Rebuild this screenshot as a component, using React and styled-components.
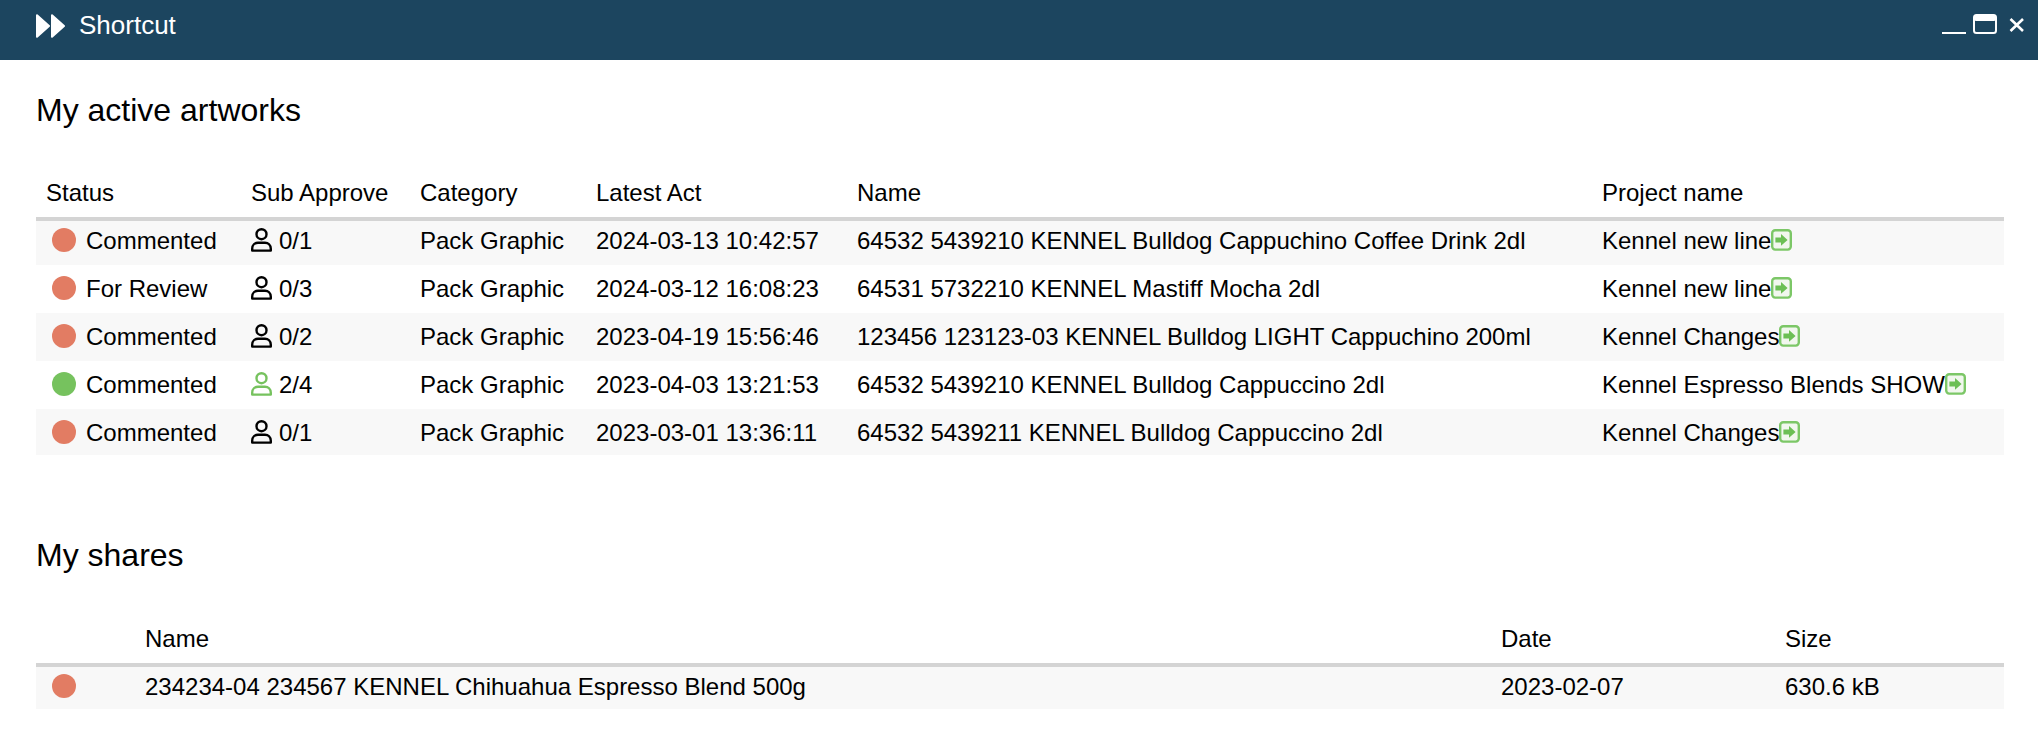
import React from "react";
import styled, { createGlobalStyle } from "styled-components";

const Global = createGlobalStyle`
  html, body { margin: 0; padding: 0; background: #fff; }
  body { font-family: "Liberation Sans", Arial, sans-serif; color: #000; }
`;

const Page = styled.div`
  width: 2038px;
  height: 736px;
  overflow: hidden;
  display: flex;
  flex-direction: column;
`;

const TitleBar = styled.header`
  height: 60px;
  flex: none;
  background: #1c455f;
  color: #fff;
  display: flex;
  align-items: flex-start;
  padding: 0 13px 0 36px;
`;

const TitleIcon = styled.svg`
  display: block;
  flex: none;
  margin-top: 14px;
`;

const TitleText = styled.span`
  font-size: 26px;
  margin-left: 14px;
  line-height: 50px;
  flex: 1;
`;

const WindowControls = styled.div`
  display: flex;
  align-items: flex-start;
`;

const ControlIcon = styled.svg`
  display: block;
  flex: none;
  margin-right: ${(p) => p.$gap || 0}px;
`;

const Content = styled.main`
  padding: 0 34px 0 36px;
`;

const Heading = styled.h2`
  margin: 0;
  font-weight: 400;
  font-size: 32px;
  line-height: 40px;
  padding-top: ${(p) => p.$top}px;
`;

const HeadRow = styled.div`
  display: grid;
  grid-template-columns: ${(p) => p.$cols};
  height: 52px;
  margin-top: ${(p) => p.$top}px;
  border-bottom: 4px solid #d4d4d4;
  font-size: 24px;
  line-height: 28px;
`;

const HeadCell = styled.div`
  padding: 14px 0 0 10px;
`;

const Row = styled.div`
  display: grid;
  grid-template-columns: ${(p) => p.$cols};
  background: ${(p) => (p.$alt ? "#f8f8f8" : "#fff")};
  font-size: 24px;
  line-height: 26px;
  padding: 11px 0 13px;
  &:first-child { padding-top: 7px; }
  &:last-child { padding-bottom: 11px; }
`;

const Cell = styled.div`
  display: flex;
  align-items: flex-start;
  height: 24px;
  padding-left: 10px;
  white-space: nowrap;
`;

const Dot = styled.span`
  width: 24px;
  height: 24px;
  border-radius: 50%;
  flex: none;
  margin-left: 6px;
  background: ${(p) => (p.$ok ? "#76c25e" : "#e27c63")};
`;

const StatusText = styled.span`
  margin-left: 10px;
`;

const SubText = styled.span`
  margin-left: 7px;
`;

const Person = ({ color }) => (
  <svg width="21" height="24" viewBox="0 0 21 24" fill="none" stroke={color} strokeWidth="2.4" style={{ flex: "none" }}>
    <circle cx="10.5" cy="6.2" r="5" />
    <path d="M1.2 22.6 V20.8 C1.2 17.2 3.9 14.8 7 14.8 H14 C17.1 14.8 19.8 17.2 19.8 20.8 V22.6 Z" strokeLinejoin="round" />
  </svg>
);

const GoIcon = () => (
  <svg width="21" height="22" viewBox="0 0 21 22" style={{ flex: "none", marginTop: "1px" }}>
    <rect x="1.2" y="1.2" width="18.6" height="19.4" rx="3" fill="#f1f7ee" stroke="#7cc767" strokeWidth="2.4" />
    <path d="M4.4 8.4 H10 V5 L16.6 10.9 L10 16.8 V13.4 H4.4 Z" fill="#6cbf55" />
  </svg>
);

const mainCols = "205px 169px 176px 261px 745px 1fr";
const shareCols = "99px 1356px 284px 1fr";

const artworks = [
  ["Commented", false, "0/1", "2024-03-13 10:42:57", "64532 5439210 KENNEL Bulldog Cappuchino Coffee Drink 2dl", "Kennel new line"],
  ["For Review", false, "0/3", "2024-03-12 16:08:23", "64531 5732210 KENNEL Mastiff Mocha 2dl", "Kennel new line"],
  ["Commented", false, "0/2", "2023-04-19 15:56:46", "123456 123123-03 KENNEL Bulldog LIGHT Cappuchino 200ml", "Kennel Changes"],
  ["Commented", true, "2/4", "2023-04-03 13:21:53", "64532 5439210 KENNEL Bulldog Cappuccino 2dl", "Kennel Espresso Blends SHOW"],
  ["Commented", false, "0/1", "2023-03-01 13:36:11", "64532 5439211 KENNEL Bulldog Cappuccino 2dl", "Kennel Changes"],
];

export default function App() {
  return (
    <Page>
      <Global />
      <TitleBar>
        <TitleIcon width="29" height="24" viewBox="0 0 29 24">
          <path d="M1 1.2 L13 12 L1 22.8 Z" fill="#fff" stroke="#fff" strokeWidth="2" strokeLinejoin="round" />
          <path d="M16 1.2 L28 12 L16 22.8 Z" fill="#fff" stroke="#fff" strokeWidth="2" strokeLinejoin="round" />
        </TitleIcon>
        <TitleText>Shortcut</TitleText>
        <WindowControls>
          <ControlIcon width="24" height="36" viewBox="0 0 24 36" $gap={7}>
            <rect x="0" y="32" width="24" height="2" fill="#fff" />
          </ControlIcon>
          <ControlIcon width="24" height="36" viewBox="0 0 24 36" $gap={12}>
            <rect x="1" y="15" width="22" height="18" rx="2.5" fill="none" stroke="#fff" strokeWidth="2" />
            <rect x="1" y="15" width="22" height="6" rx="2" fill="#fff" />
          </ControlIcon>
          <ControlIcon width="16" height="36" viewBox="0 0 16 36">
            <path d="M1.5 19 L14 31 M14 19 L1.5 31" stroke="#fff" strokeWidth="2.6" />
          </ControlIcon>
        </WindowControls>
      </TitleBar>
      <Content>
        <Heading $top={30}>My active artworks</Heading>
        <HeadRow $cols={mainCols} $top={35}>
          <HeadCell>Status</HeadCell>
          <HeadCell>Sub Approve</HeadCell>
          <HeadCell>Category</HeadCell>
          <HeadCell>Latest Act</HeadCell>
          <HeadCell>Name</HeadCell>
          <HeadCell>Project name</HeadCell>
        </HeadRow>
        <div>
          {artworks.map((a, i) => (
            <Row key={i} $cols={mainCols} $alt={i % 2 === 0}>
              <Cell>
                <Dot $ok={a[1]} />
                <StatusText>{a[0]}</StatusText>
              </Cell>
              <Cell>
                <Person color={a[1] ? "#76c25e" : "#000"} />
                <SubText>{a[2]}</SubText>
              </Cell>
              <Cell>Pack Graphic</Cell>
              <Cell>{a[3]}</Cell>
              <Cell>{a[4]}</Cell>
              <Cell>
                {a[5]}
                <GoIcon />
              </Cell>
            </Row>
          ))}
        </div>
        <Heading $top={80}>My shares</Heading>
        <HeadRow $cols={shareCols} $top={36}>
          <HeadCell />
          <HeadCell>Name</HeadCell>
          <HeadCell>Date</HeadCell>
          <HeadCell>Size</HeadCell>
        </HeadRow>
        <div>
          <Row $cols={shareCols} $alt>
            <Cell>
              <Dot />
            </Cell>
            <Cell>234234-04 234567 KENNEL Chihuahua Espresso Blend 500g</Cell>
            <Cell>2023-02-07</Cell>
            <Cell>630.6 kB</Cell>
          </Row>
        </div>
      </Content>
    </Page>
  );
}
